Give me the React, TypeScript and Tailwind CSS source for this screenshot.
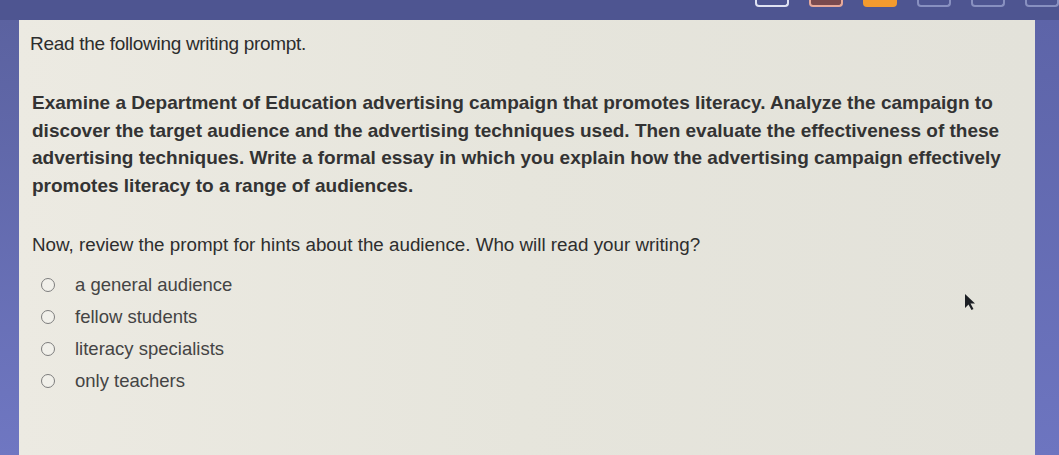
import React from 'react';

const options = ['a general audience', 'fellow students', 'literacy specialists', 'only teachers'];

const Tab = ({cls}: {cls: string}) => (
    <div className={"h-[7px] w-[35px] rounded-b-[4px] border-2 border-t-0 " + cls}></div>
);

const App = () => {
    return (
        <div className="w-[1059px] h-[455px] overflow-hidden bg-[#4e5591] flex flex-col" style={{fontFamily: '"Liberation Sans", Arial, sans-serif'}}>
            <div className="h-[20px] flex items-start pl-[755px] gap-[20px] shrink-0">
                <Tab cls="border-[#dfe2f2] bg-[#4e5591]"/>
                <Tab cls="border-[#e7a99a] bg-[#7a4a4e]"/>
                <Tab cls="border-[#f39a2e] bg-[#f39a2e]"/>
                <Tab cls="border-[#8890c0] bg-[#4e5591]"/>
                <Tab cls="border-[#8890c0] bg-[#4e5591]"/>
                <Tab cls="border-[#8890c0] bg-[#4e5591]"/>
            </div>
            <div className="flex flex-1">
                <div className="w-[19px] bg-gradient-to-b from-[#5b62a0] to-[#6f77c2] shrink-0"></div>
                <div className="relative flex-1 bg-gradient-to-r from-[#eceae2] via-[#e6e5dc] to-[#e3e2da] pl-[11px] pt-[13px]">
                    <p className="text-[19px] leading-[22px] tracking-[-0.3px] text-[#2d2d2d]">Read the following writing prompt.</p>
                    <p className="mt-[34px] text-[19px] leading-[27.5px] font-bold text-[#333333] pl-[2px]">
                        Examine a Department of Education advertising campaign that promotes literacy. Analyze the campaign to<br/>
                        discover the target audience and the advertising techniques used. Then evaluate the effectiveness of these<br/>
                        advertising techniques. Write a formal essay in which you explain how the advertising campaign effectively<br/>
                        promotes literacy to a range of audiences.
                    </p>
                    <p className="mt-[35px] text-[18.8px] leading-[22px] text-[#2e2e2e] pl-[2px]">Now, review the prompt for hints about the audience. Who will read your writing?</p>
                    <div className="mt-[19px] flex flex-col gap-[12px] pl-[11px]">
                        {options.map(o => (
                            <label key={o} className="flex items-center gap-[20px] h-[20px]">
                                <span className="w-[14px] h-[14px] rounded-full border-[1.5px] border-[#7d7d7d] bg-[#f1f0ea] shrink-0"></span>
                                <span className="text-[18.5px] text-[#444444]">{o}</span>
                            </label>
                        ))}
                    </div>
                    <svg className="absolute left-[945px] top-[273px]" width="14" height="18" viewBox="0 0 14 18">
                        <path d="M1 1 L1 15 L4.5 11.5 L7.5 17 L9.5 16 L6.5 10.5 L11 10.5 Z" fill="#1c1f24"/>
                    </svg>
                </div>
                <div className="w-[24px] bg-gradient-to-b from-[#5d64a8] to-[#6d75c0] shrink-0"></div>
            </div>
        </div>
    );
};

export default App;
